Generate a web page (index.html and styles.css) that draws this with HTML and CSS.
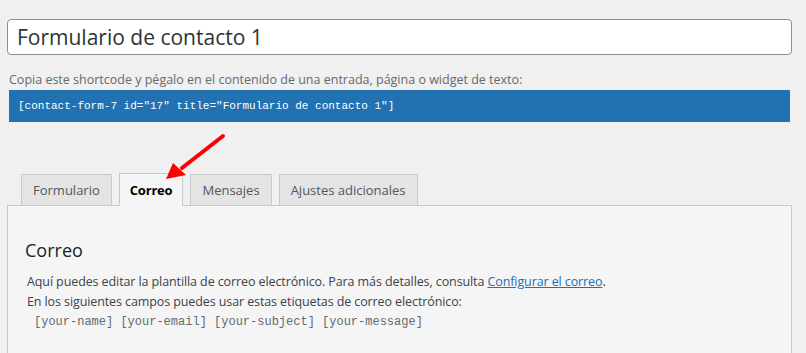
FILE: index.html
```html
<!DOCTYPE html>
<html lang="es">
<head>
<meta charset="utf-8">
<title>Formulario de contacto 1</title>
<link rel="stylesheet" href="styles.css">
</head>
<body>
<div class="wrap">
  <div class="title-input">Formulario de contacto 1</div>
  <p class="desc">Copia este shortcode y pégalo en el contenido de una entrada, página o widget de texto:</p>
  <div class="shortcode">[contact-form-7 id="17" title="Formulario de contacto 1"]</div>
  <div class="editor">
    <ul class="tabs">
      <li class="tab">Formulario</li>
      <li class="tab active">Correo</li>
      <li class="tab">Mensajes</li>
      <li class="tab">Ajustes adicionales</li>
    </ul>
    <div class="panel">
      <h2 class="panel-title">Correo</h2>
      <p class="line">Aquí puedes editar la plantilla de correo electrónico. Para más detalles, consulta <a href="#">Configurar el correo</a>.</p>
      <p class="line">En los siguientes campos puedes usar estas etiquetas de correo electrónico:</p>
      <p class="tags">[your-name] [your-email] [your-subject] [your-message]</p>
    </div>
    <svg class="arrow" width="80" height="60" viewBox="0 0 80 60">
      <line x1="71" y1="6" x2="30" y2="38" stroke="#f00" stroke-width="4" stroke-linecap="round"/>
      <polygon points="14,49 21,33 34,45" fill="#f00"/>
    </svg>
  </div>
</div>
</body>
</html>
```
FILE: styles.css
```css
html, body {
  margin: 0;
  padding: 0;
  background: #f0f0f1;
  font-family: "Open Sans", "Noto Sans", sans-serif;
  color: #3c434a;
  font-size: 13px;
}
.wrap {
  padding: 19px 14px 0 7px;
}
.title-input {
  box-sizing: border-box;
  height: 36px;
  background: #fff;
  border: 1px solid #8c8f94;
  border-radius: 4px;
  padding: 0 9px;
  font-size: 21px;
  line-height: 34px;
  color: #2c3338;
}
.desc {
  margin: 16px 0 0 2px;
  font-size: 12.5px;
  line-height: 18px;
  color: #646970;
}
.shortcode {
  margin: 1px 2px 0 2px;
  height: 32px;
  box-sizing: border-box;
  background: #2271b1;
  color: #fff;
  font-family: "Liberation Mono", monospace;
  font-size: 11px;
  line-height: 32px;
  padding: 0 9px;
}
.editor {
  position: relative;
  margin-top: 51px;
}
.tabs {
  list-style: none;
  margin: 0;
  padding: 0 0 0 14px;
  display: flex;
  gap: 7px;
  align-items: flex-end;
  position: relative;
  z-index: 1;
}
.tab {
  box-sizing: border-box;
  height: 32px;
  margin-bottom: -1px;
  padding: 0 11px;
  background: #e4e4e4;
  border: 1px solid #c9c9c9;
  line-height: 30px;
  font-size: 13px;
  color: #50575e;
}
.tab.active {
  height: 33px;
  padding: 0 10px;
  background: #f5f5f5;
  border-bottom-color: #f5f5f5;
  color: #000;
  font-weight: 700;
  line-height: 32px;
  letter-spacing: -0.2px;
}
.panel {
  background: #f5f5f5;
  border: 1px solid #c9c9c9;
  border-bottom: 0;
  padding: 32px 17px 30px 17px;
}
.panel-title {
  margin: 0 0 10px 0;
  font-size: 18px;
  font-weight: 400;
  line-height: 24px;
  color: #1d2327;
}
.line {
  margin: 0 0 0 2px;
  font-size: 12.5px;
  line-height: 20px;
  letter-spacing: -0.1px;
}
.line a {
  color: #2271b1;
  text-decoration: underline;
}
.tags {
  margin: 0 0 0 9px;
  font-family: "Liberation Mono", monospace;
  font-size: 12px;
  line-height: 20px;
  color: #646970;
}
.arrow {
  position: absolute;
  left: 145px;
  top: -43px;
  z-index: 2;
}
```
